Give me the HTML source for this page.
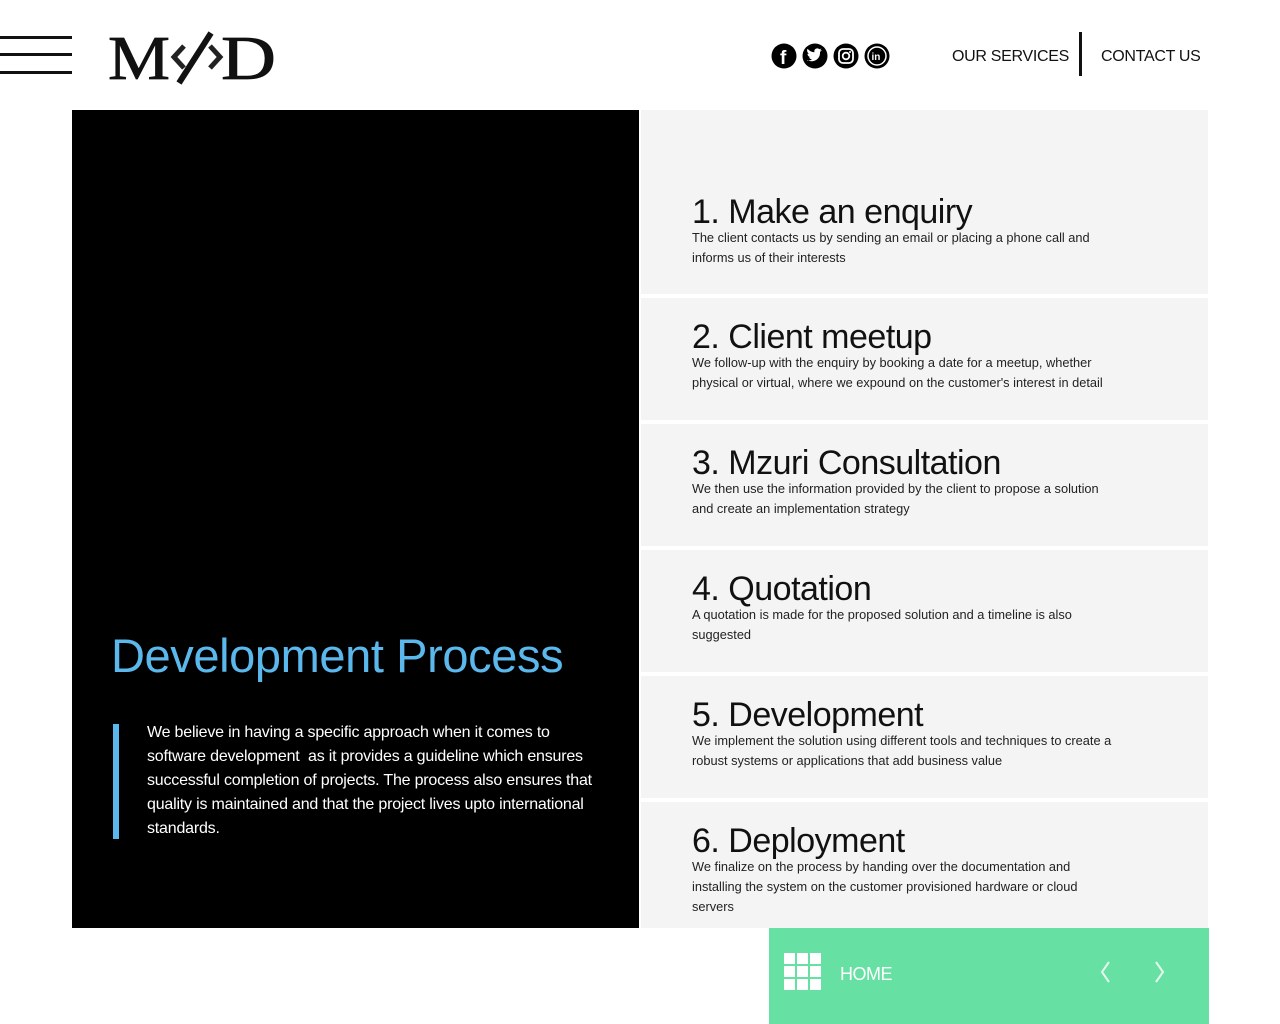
<!DOCTYPE html>
<html><head><meta charset="utf-8"><style>
*{margin:0;padding:0;box-sizing:border-box}
body{width:1280px;height:1024px;background:#fff;font-family:"Liberation Sans",sans-serif;position:relative;overflow:hidden}
.abs{position:absolute}
.ham div{position:absolute;left:0;width:72px;height:3px;background:#111}
.nav{top:48px;font-size:16px;color:#111;letter-spacing:-0.3px}
.black{left:72px;top:110px;width:567px;height:818px;background:#000}
.card{position:absolute;left:641px;width:567px;background:#f4f4f4}
.card h2{position:absolute;left:51px;font-weight:normal;font-size:34px;color:#111;letter-spacing:-0.5px;white-space:nowrap}
.card p{position:absolute;left:51px;width:480px;font-size:12.8px;line-height:20px;color:#222;white-space:nowrap}
</style></head><body>
<div class="ham abs" style="left:0;top:36px;width:72px;height:42px">
<div style="top:0"></div><div style="top:17px"></div><div style="top:35px"></div></div>
<svg class="abs" style="left:100px;top:24px" width="190" height="66" viewBox="0 0 190 66">
<text x="8" y="55" font-family="Liberation Serif" font-size="62" fill="#111" textLength="62" lengthAdjust="spacingAndGlyphs" stroke="#111" stroke-width="0.8">M</text>
<text x="121" y="55" font-family="Liberation Serif" font-size="62" fill="#111" textLength="55" lengthAdjust="spacingAndGlyphs" stroke="#111" stroke-width="0.8">D</text>
<path d="M84 22 L74 33 L84 44" stroke="#222" stroke-width="5" fill="none"/>
<path d="M110 22 L120 33 L110 44" stroke="#222" stroke-width="5" fill="none"/>
<path d="M111 9 L79 59" stroke="#111" stroke-width="6"/></svg>
<svg class="abs" style="left:771px;top:43px" width="120" height="26">
<circle cx="13" cy="13" r="12.5" fill="#000"/><text x="9" y="21" font-family="Liberation Sans" font-weight="bold" font-size="19" fill="#fff">f</text>
<circle cx="44" cy="13" r="12.5" fill="#000"/><path d="M36 17c3 2 9 2 12-3 1-2 1-3 1-5l2-2-2 .5 1.5-2-2 .8c-2-2-6-.5-5 3-3 0-5-1.5-7-3.5-1 2 0 4 1.5 5h-1.5c0 2 1.5 3 3 3.5h-1.5c.5 1.5 2 2 3 2-1.5 1-3 1.5-5 1.3z" fill="#fff"/>
<circle cx="75" cy="13" r="12.5" fill="#000"/><rect x="68" y="6" width="14" height="14" rx="4" fill="none" stroke="#fff" stroke-width="1.8"/><circle cx="75" cy="13" r="3.3" fill="none" stroke="#fff" stroke-width="1.8"/><circle cx="79" cy="9" r="1" fill="#fff"/>
<circle cx="106" cy="13" r="12.5" fill="#000"/><circle cx="106" cy="13" r="9" fill="none" stroke="#fff" stroke-width="1.5"/><text x="100.5" y="17" font-family="Liberation Sans" font-weight="bold" font-size="10" fill="#fff">in</text>
</svg>
<div class="abs nav" style="left:952px">OUR SERVICES</div>
<div class="abs" style="left:1079px;top:32px;width:3px;height:44px;background:#111"></div>
<div class="abs nav" style="left:1101px">CONTACT US</div>
<div class="abs black"></div>
<div class="abs" style="left:111px;top:628px;font-size:47px;color:#5ab8ec;letter-spacing:-0.4px">Development Process</div>
<div class="abs" style="left:113px;top:724px;width:6px;height:115px;background:#5ab8ec"></div>
<div class="abs" style="left:147px;top:721px;font-size:16px;line-height:24px;color:#fff;white-space:nowrap;letter-spacing:-0.2px">We believe in having a specific approach when it comes to<br>software development&nbsp; as it provides a guideline which ensures<br>successful completion of projects. The process also ensures that<br>quality is maintained and that the project lives upto international<br>standards.</div>
<div class="card" style="top:110px;height:184px"><h2 style="top:83px">1. Make an enquiry</h2><p style="top:118px">The client contacts us by sending an email or placing a phone call and<br>informs us of their interests</p></div>
<div class="card" style="top:298px;height:122px"><h2 style="top:20px">2. Client meetup</h2><p style="top:55px">We follow-up with the enquiry by booking a date for a meetup, whether<br>physical or virtual, where we expound on the customer's interest in detail</p></div>
<div class="card" style="top:424px;height:122px"><h2 style="top:20px">3. Mzuri Consultation</h2><p style="top:55px">We then use the information provided by the client to propose a solution<br>and create an implementation strategy</p></div>
<div class="card" style="top:550px;height:122px"><h2 style="top:20px">4. Quotation</h2><p style="top:55px">A quotation is made for the proposed solution and a timeline is also<br>suggested</p></div>
<div class="card" style="top:676px;height:122px"><h2 style="top:20px">5. Development</h2><p style="top:55px">We implement the solution using different tools and techniques to create a<br>robust systems or applications that add business value</p></div>
<div class="card" style="top:802px;height:126px"><h2 style="top:20px">6. Deployment</h2><p style="top:55px">We finalize on the process by handing over the documentation and<br>installing the system on the customer provisioned hardware or cloud<br>servers</p></div>
<div class="abs" style="left:769px;top:928px;width:440px;height:96px;background:#66e0a3"></div>
<svg class="abs" style="left:784px;top:953px" width="37" height="38">
<g fill="#fff"><rect x="0" y="0" width="11" height="11"/><rect x="13" y="0" width="11" height="11"/><rect x="26" y="0" width="11" height="11"/>
<rect x="0" y="13" width="11" height="11"/><rect x="13" y="13" width="11" height="11"/><rect x="26" y="13" width="11" height="11"/>
<rect x="0" y="26" width="11" height="11"/><rect x="13" y="26" width="11" height="11"/><rect x="26" y="26" width="11" height="11"/></g></svg>
<div class="abs" style="left:840px;top:964px;font-size:18px;color:#fff;letter-spacing:-0.5px">HOME</div>
<svg class="abs" style="left:1098px;top:960px" width="70" height="26">
<path d="M11 2 L4 12 L11 22" stroke="#e6f7ee" stroke-width="2" fill="none"/>
<path d="M58 2 L65 12 L58 22" stroke="#e6f7ee" stroke-width="2" fill="none"/></svg>
</body></html>
